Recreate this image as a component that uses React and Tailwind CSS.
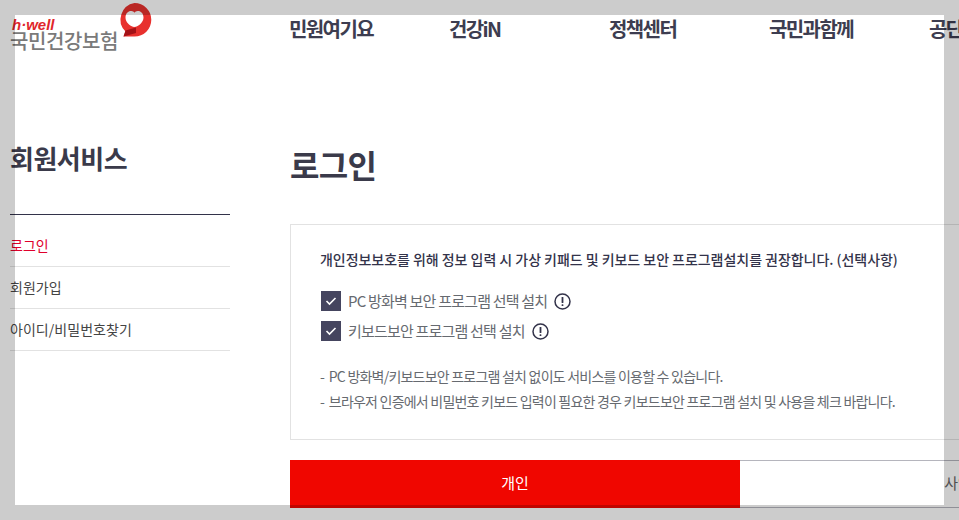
const F = { fontFamily: '"Noto Sans CJK KR", "Noto Sans", sans-serif' };

function Alert() {
  return (
    <svg width="17" height="17" viewBox="0 0 17 17" className="shrink-0">
      <circle cx="8.5" cy="8.5" r="7.5" fill="none" stroke="#33334a" strokeWidth="1.5" />
      <rect x="7.6" y="4" width="1.8" height="6" rx="0.6" fill="#33334a" />
      <rect x="7.6" y="11.2" width="1.8" height="1.8" rx="0.6" fill="#33334a" />
    </svg>
  );
}

function Check({ label }) {
  return (
    <div className="flex h-[20px] items-center">
      <span className="flex h-[20px] w-[20px] shrink-0 items-center justify-center bg-[#45455f]">
        <svg width="12" height="10" viewBox="0 0 12 10">
          <path d="M1.5 5 L4.5 8 L10.5 2" fill="none" stroke="#fff" strokeWidth="1.6" />
        </svg>
      </span>
      <span className="ml-[7px] mr-[7px] text-[15px] leading-[20px] tracking-[-0.8px] text-[#666a70]">{label}</span>
      <Alert />
    </div>
  );
}

function Logo() {
  return (
    <div className="relative h-[60px] w-[279px] shrink-0">
      <div className="pl-[2px] pt-[18px] text-[15px] font-bold italic leading-[13px] text-[#e0262b]" style={{ fontFamily: '"Liberation Sans", sans-serif' }}>
        h·well
      </div>
      <div className="text-[20px] font-medium leading-[20px] tracking-[-0.4px] text-[#7a7a7a]">국민건강보험</div>
      <svg width="36" height="38" viewBox="0 0 36 38" className="absolute left-[107px] top-[1px]">
        <path d="M17.5 2 A16.8 16.8 0 0 1 17.5 35.6 L6.5 35.5 L8.5 30.5 A16.8 16.8 0 0 1 17.5 2 Z" fill="#e8312e" />
        <path d="M8.5 29.5 L19 26.5 L19 32 L6.5 35.5 Z" fill="#a31217" />
        <path d="M17 26 C12.5 25 8.5 21 8.5 16.5 C8.5 12 11.5 9.8 14.3 10 C15.8 10.1 16.8 10.8 17.5 11.8 C18.2 10.8 19.2 10.1 20.7 10 C23.5 9.8 26.5 12 26.5 16.5 C26.5 21 22 25.5 17 26 Z" fill="#fff" />
      </svg>
    </div>
  );
}

export default function App() {
  return (
    <div className="relative h-[520px] w-[959px] overflow-hidden bg-white" style={F}>
      <div className="w-[1300px]">
        <header className="flex h-[60px] pl-[10px]">
          <Logo />
          <nav className="flex">
            {["민원여기요", "건강iN", "정책센터", "국민과함께", "공단소개"].map((t) => (
              <a key={t} className="block w-[160px] pt-[16px] text-[20px] font-bold leading-[26px] tracking-[-1.6px] text-[#3d3d50]">{t}</a>
            ))}
          </nav>
        </header>

        <div className="flex pl-[10px] pt-[79px]">
          <aside className="mr-[60px] w-[220px] shrink-0">
            <h2 className="mb-[10px] box-content h-[75px] border-b border-[#33334a] text-[26px] font-bold leading-[38px] tracking-[-0.5px] text-[#3a3a4a]">회원서비스</h2>
            <ul className="text-[14px] tracking-[0.05px]">
              <li className="flex h-[42px] items-center border-b border-[#e2e2e2] text-[#e0002b]">로그인</li>
              <li className="flex h-[42px] items-center border-b border-[#e2e2e2] text-[#444]">회원가입</li>
              <li className="flex h-[42px] items-center border-b border-[#e2e2e2] text-[#444]">아이디/비밀번호찾기</li>
            </ul>
          </aside>

          <main className="w-[900px] shrink-0">
            <h1 className="mb-[20px] mt-[1px] h-[64px] text-[32px] font-bold leading-[48px] tracking-[-0.7px] text-[#3a3a4a]">로그인</h1>
            <section className="h-[216px] border border-[#e2e2e2] px-[29px] pt-[23px]">
              <p className="text-[14px] font-medium leading-[22px] tracking-[-0.04px] text-[#33334a]">개인정보보호를 위해 정보 입력 시 가상 키패드 및 키보드 보안 프로그램설치를 권장합니다. (선택사항)</p>
              <div className="mt-[21px] flex flex-col gap-[10px] pl-[1px]">
                <Check label="PC 방화벽 보안 프로그램 선택 설치" />
                <Check label="키보드보안 프로그램 선택 설치" />
              </div>
              <ul className="mt-[23px] text-[14px] leading-[25px] tracking-[-0.78px] text-[#666a70]">
                <li>-&nbsp; PC 방화벽/키보드보안 프로그램 설치 없이도 서비스를 이용할 수 있습니다.</li>
                <li>-&nbsp; 브라우저 인증에서 비밀번호 키보드 입력이 필요한 경우 키보드보안 프로그램 설치 및 사용을 체크 바랍니다.</li>
              </ul>
            </section>
            <div className="mt-[20px] flex h-[48px]">
              <button className="w-[450px] bg-[#f00600] pb-[2px] text-[15px] text-white">개인</button>
              <button className="w-[450px] border-y border-[#b5b5bd] pb-[2px] text-[15px] text-[#666]">사업장</button>
            </div>
          </main>
        </div>
      </div>
      <div className="pointer-events-none absolute inset-0 border-[15px] border-black/20" />
    </div>
  );
}
